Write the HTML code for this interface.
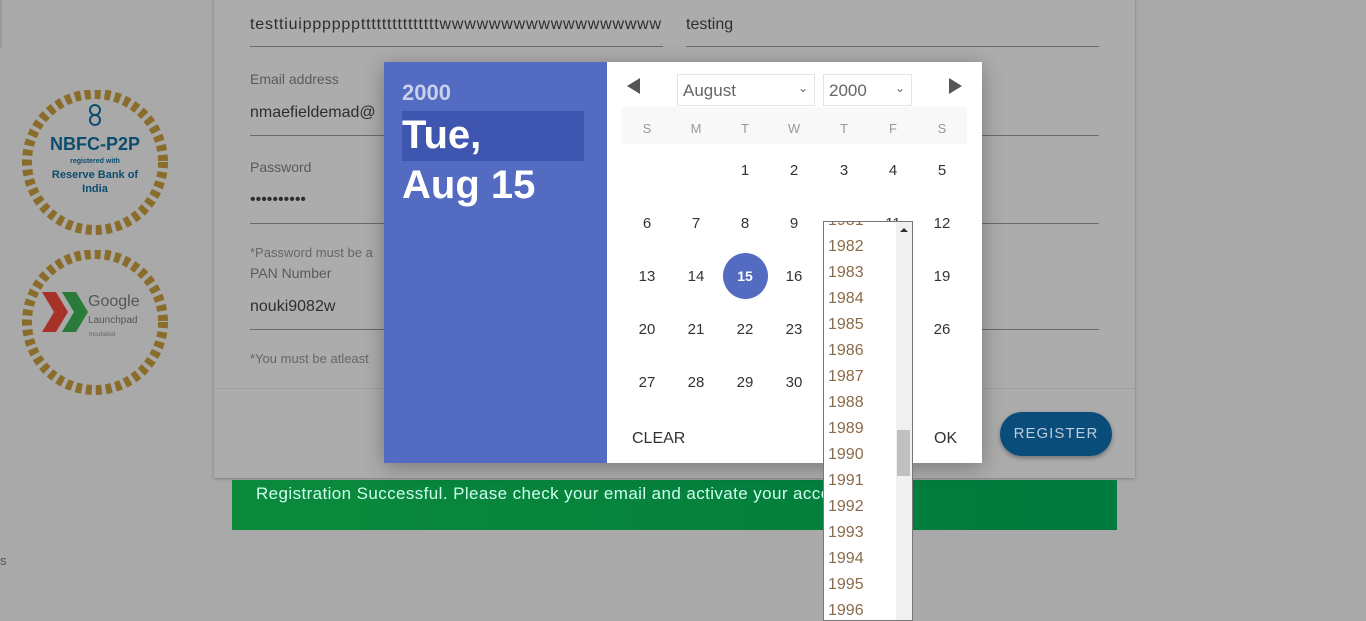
<!DOCTYPE html>
<html><head><style>
*{margin:0;padding:0;box-sizing:border-box}
body{width:1366px;height:613px;overflow:hidden;background:#a9a9a9;font-family:"Liberation Sans",sans-serif;position:relative;color:#333}
.abs{position:absolute}
.card{left:214px;top:-5px;width:921px;height:483px;background:#acacac;box-shadow:0 1px 3px rgba(0,0,0,.25)}
.lbl{font-size:14px;color:#5a5a5a}
.val{font-size:16px;color:#2e2e2e}
.line{height:1px;background:#6a6a6a}
.modal{left:384px;top:62px;width:598px;height:401px;background:#fff;box-shadow:0 4px 20px rgba(0,0,0,.3)}
.left{left:0;top:0;width:223px;height:401px;background:#536bc0}
.day{position:absolute;width:44px;text-align:center;font-size:15px;color:#333}
.wk{position:absolute;width:44px;text-align:center;font-size:13px;color:#999;top:59px}
.yr{font-size:16px;color:#8a6a4a;height:26px;line-height:26px;padding-left:4px}
</style></head><body>
<div class="abs" style="left:0;top:0;width:2px;height:48px;background:#999"></div>
<div class="abs card"></div>
<div class="abs val" style="left:250px;top:16px;letter-spacing:0.8px">testtiuipppppptttttttttttttttwwwwwwwwwwwwwwwwww</div>
<div class="abs line" style="left:250px;top:46px;width:413px"></div>
<div class="abs val" style="left:686px;top:16px">testing</div>
<div class="abs line" style="left:686px;top:46px;width:413px"></div>
<div class="abs lbl" style="left:250px;top:71px">Email address</div>
<div class="abs val" style="left:250px;top:104px">nmaefieldemad@</div>
<div class="abs line" style="left:250px;top:135px;width:849px"></div>
<div class="abs lbl" style="left:250px;top:159px">Password</div>
<div class="abs val" style="left:250px;top:191px">••••••••••</div>
<div class="abs line" style="left:250px;top:223px;width:849px"></div>
<div class="abs lbl" style="left:250px;top:245px;font-size:13px;color:#666">*Password must be a</div>
<div class="abs lbl" style="left:250px;top:265px">PAN Number</div>
<div class="abs val" style="left:250px;top:298px">nouki9082w</div>
<div class="abs line" style="left:250px;top:329px;width:849px"></div>
<div class="abs lbl" style="left:250px;top:351px;font-size:13px;color:#666">*You must be atleast</div>
<div class="abs" style="left:214px;top:388px;width:921px;height:1px;background:#9e9e9e"></div>
<div class="abs" style="left:1000px;top:412px;width:112px;height:44px;border-radius:22px;background:#0a4d7a;color:#bcd;font-size:15px;text-align:center;line-height:44px;letter-spacing:1px;box-shadow:0 2px 5px rgba(0,0,0,.35)">REGISTER</div>
<div class="abs" style="left:232px;top:480px;width:885px;height:50px;background:linear-gradient(90deg,#0b8a3c,#007a3d);color:#cfe;font-size:17px;padding:4px 0 0 24px;letter-spacing:0.4px">Registration Successful. Please check your email and activate your account</div>
<div class="abs" style="left:0;top:553px;font-size:13px;color:#555">s</div>
<!-- badges -->
<svg class="abs" style="left:20px;top:90px" width="150" height="145"><ellipse cx="75" cy="72" rx="68" ry="68" fill="none" stroke="#8a6d2a" stroke-width="10" stroke-dasharray="6 4"/>
<text x="75" y="60" text-anchor="middle" font-family="Liberation Sans" font-weight="bold" font-size="18" fill="#0b4d6e">NBFC-P2P</text>
<text x="75" y="73" text-anchor="middle" font-family="Liberation Sans" font-weight="bold" font-size="7" fill="#0b4d6e">registered with</text>
<text x="75" y="88" text-anchor="middle" font-family="Liberation Sans" font-weight="bold" font-size="11" fill="#0b4d6e">Reserve Bank of</text>
<text x="75" y="102" text-anchor="middle" font-family="Liberation Sans" font-weight="bold" font-size="11" fill="#0b4d6e">India</text>
<circle cx="75" cy="20" r="5" fill="none" stroke="#0b4d6e" stroke-width="2"/><circle cx="75" cy="30" r="5" fill="none" stroke="#0b4d6e" stroke-width="2"/></svg>
<svg class="abs" style="left:20px;top:250px" width="150" height="145"><ellipse cx="75" cy="72" rx="68" ry="68" fill="none" stroke="#8a6d2a" stroke-width="10" stroke-dasharray="6 4"/>
<path d="M22 42h14l12 20-12 20H22l12-20z" fill="#a8322a"/><path d="M42 42h14l12 20-12 20H42l12-20z" fill="#2a7a3a"/>
<text x="68" y="56" font-family="Liberation Sans" font-size="16" fill="#555">Google</text>
<text x="68" y="73" font-family="Liberation Sans" font-size="10" fill="#555">Launchpad</text>
<text x="69" y="86" font-family="Liberation Sans" font-size="6" fill="#666">Incubated</text></svg>
<!-- modal -->
<div class="abs modal">
 <div class="abs left">
  <div class="abs" style="left:18px;top:18px;font-size:22px;color:#c8d0ee;font-weight:bold">2000</div>
  <div class="abs" style="left:18px;top:49px;width:182px;height:50px;background:#3e56b0"></div>
  <div class="abs" style="left:18px;top:48px;font-size:40px;color:#fff;line-height:50px;font-weight:bold">Tue,<br>Aug 15</div>
 </div>
 <div class="abs" style="left:243px;top:16px;width:0;height:0;border-top:8px solid transparent;border-bottom:8px solid transparent;border-right:13px solid #555"></div>
 <div class="abs" style="left:565px;top:16px;width:0;height:0;border-top:8px solid transparent;border-bottom:8px solid transparent;border-left:13px solid #555"></div>
 <div class="abs" style="left:293px;top:12px;width:138px;height:32px;border:1px solid #e4e4e4;font-size:17px;color:#666;padding:6px 5px">August<span style="position:absolute;right:6px;top:6px;font-size:12px">⌄</span></div>
 <div class="abs" style="left:439px;top:12px;width:89px;height:32px;border:1px solid #e4e4e4;font-size:17px;color:#666;padding:6px 5px">2000<span style="position:absolute;right:6px;top:6px;font-size:12px">⌄</span></div>
 <div class="abs" style="left:238px;top:45px;width:345px;height:37px;background:#f8f8f8"></div>
 <div class="wk" style="left:241px">S</div><div class="wk" style="left:290px">M</div><div class="wk" style="left:339px">T</div><div class="wk" style="left:388px">W</div><div class="wk" style="left:438px">T</div><div class="wk" style="left:487px">F</div><div class="wk" style="left:536px">S</div>
 <div class="abs" style="left:339px;top:191px;width:45px;height:46px;border-radius:50%;background:#536bc0"></div>
 <div class="day" style="left:339px;top:100px">1</div><div class="day" style="left:388px;top:100px">2</div><div class="day" style="left:438px;top:100px">3</div><div class="day" style="left:487px;top:100px">4</div><div class="day" style="left:536px;top:100px">5</div>
 <div class="day" style="left:241px;top:153px">6</div><div class="day" style="left:290px;top:153px">7</div><div class="day" style="left:339px;top:153px">8</div><div class="day" style="left:388px;top:153px">9</div><div class="day" style="left:487px;top:153px">11</div><div class="day" style="left:536px;top:153px">12</div>
 <div class="day" style="left:241px;top:206px">13</div><div class="day" style="left:290px;top:206px">14</div><div class="day" style="left:339px;top:206px;color:#fff;font-weight:bold;font-size:14px">15</div><div class="day" style="left:388px;top:206px">16</div><div class="day" style="left:536px;top:206px">19</div>
 <div class="day" style="left:241px;top:259px">20</div><div class="day" style="left:290px;top:259px">21</div><div class="day" style="left:339px;top:259px">22</div><div class="day" style="left:388px;top:259px">23</div><div class="day" style="left:536px;top:259px">26</div>
 <div class="day" style="left:241px;top:312px">27</div><div class="day" style="left:290px;top:312px">28</div><div class="day" style="left:339px;top:312px">29</div><div class="day" style="left:388px;top:312px">30</div>
 <div class="abs" style="left:248px;top:368px;font-size:16px;color:#333">CLEAR</div>
 <div class="abs" style="left:550px;top:368px;font-size:16px;color:#333">OK</div>
</div>
<!-- year list -->
<div class="abs" style="left:823px;top:221px;width:90px;height:400px;background:#fff;border:1px solid #777;overflow:hidden">
 <div class="abs" style="right:0;top:0;width:16px;height:400px;background:#f0f0f0"></div>
 <div class="abs" style="right:4px;top:6px;width:0;height:0;border-left:4px solid transparent;border-right:4px solid transparent;border-bottom:4px solid #333"></div>
 <div class="abs" style="right:2px;top:208px;width:13px;height:46px;background:#c0c0c0"></div>
 <div style="margin-top:-14px;width:72px">
 <div class="yr">1981</div><div class="yr">1982</div><div class="yr">1983</div><div class="yr">1984</div><div class="yr">1985</div><div class="yr">1986</div><div class="yr">1987</div><div class="yr">1988</div><div class="yr">1989</div><div class="yr">1990</div><div class="yr">1991</div><div class="yr">1992</div><div class="yr">1993</div><div class="yr">1994</div><div class="yr">1995</div><div class="yr">1996</div>
 </div>
</div>
</body></html>
